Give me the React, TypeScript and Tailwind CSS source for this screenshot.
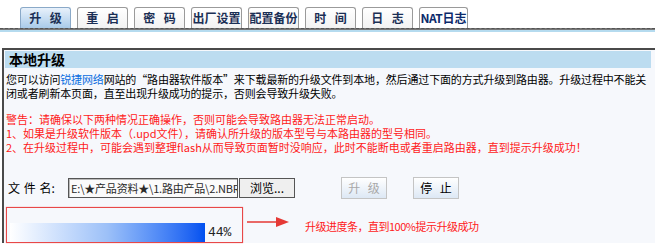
import React from "react";

const tabs = ["升 级", "重 启", "密 码", "出厂设置", "配置备份", "时 间", "日 志"];

function Tab({ label, active }: { label: string; active?: boolean }) {
  return (
    <div
      className={
        active
          ? "flex h-[21px] w-[51px] items-center justify-center rounded-t-[3px] border border-b-0 border-[#8aa9c8] bg-gradient-to-b from-[#e8f1fb] to-[#a9cbe9] text-[12px] font-bold text-[#1b2f55] [word-spacing:6px]"
          : "flex h-[21px] w-[51px] items-center justify-center rounded-t-[3px] border border-b-0 border-[#9a9a9a] bg-gradient-to-b from-white to-[#f2f2f2] text-[12px] font-bold text-[#1b2f55] [word-spacing:6px]"
      }
    >
      {label}
    </div>
  );
}

function TabBar() {
  return (
    <div className="pt-[7px]">
      <div className="flex gap-[6px] pl-[20px]">
        <Tab label={tabs[0]} active />
        {tabs.slice(1).map((t) => (
          <Tab key={t} label={t} />
        ))}
        <div className="flex h-[21px] w-[49px] items-center justify-center rounded-t-[3px] border border-b-0 border-[#9a9a9a] bg-white text-[12px] font-bold text-[#0b2a6b]">
          <span className="tracking-[-0.5px]">NAT</span>日志
        </div>
      </div>
      <div className="h-[2px] border-t border-dashed border-[#555] bg-[#777]" />
      <div className="h-[2px] bg-[#b5dbef]" />
    </div>
  );
}

function Arrow() {
  return (
    <svg width="44" height="12" viewBox="0 0 44 12" className="mt-[-6px]">
      <line x1="0" y1="6" x2="30" y2="6" stroke="#e53935" strokeWidth="1.5" />
      <polygon points="29,1 42,6 29,11" fill="#e53935" />
    </svg>
  );
}

function Panel() {
  return (
    <div className="ml-[2px] mt-[16px] border-l-2 border-t-2 border-[#4a4a4a] bg-[#f6f8fc] pl-[1px] pt-[1px]">
      <div className="mr-[4px] flex h-[17px] items-center bg-[#bcdcf0] pl-[4px] text-[14px] font-bold text-black">
        本地升级
      </div>
      <div className="whitespace-nowrap pl-[1px] pt-[4px] text-[11px] leading-[14px] text-black">
        <p className="tracking-[-0.15px]">
          您可以访问<span className="text-[#0a6ee0]">锐捷网络</span>网站的“路由器软件版本”来下载最新的升级文件到本地，然后通过下面的方式升级到路由器。升级过程中不能关
          <br />
          闭或者刷新本页面，直至出现升级成功的提示，否则会导致升级失败。
        </p>
        <div className="mt-[12px] text-[#ff1a1a]">
          <p>警告：请确保以下两种情况正确操作，否则可能会导致路由器无法正常启动。</p>
          <p>1、如果是升级软件版本（.upd文件），请确认所升级的版本型号与本路由器的型号相同。</p>
          <p>2、在升级过程中，可能会遇到整理flash从而导致页面暂时没响应，此时不能断电或者重启路由器，直到提示升级成功！</p>
        </div>
      </div>
      <div className="mt-[23px] flex items-center">
        <span className="ml-[3px] w-[60px] text-[12px] [word-spacing:1px]">文 件 名:</span>
        <div className="h-[20px] w-[170px] overflow-hidden whitespace-nowrap border border-[#555] bg-[#fbfbfb] pl-[2px] text-[11px] leading-[18px] tracking-[-0.2px] text-[#2a2a2a] shadow-[inset_1px_1px_0_#bbb]">
          E:\★产品资料★\1.路由产品\2.NBR
        </div>
        <div className="ml-[1px] flex h-[20px] w-[56px] items-center justify-center border border-[#555] bg-[#efefef] text-[12px] text-black">
          浏览...
        </div>
        <div className="ml-[46px] flex h-[22px] w-[46px] items-center justify-center border border-[#c4c4c4] bg-gradient-to-b from-white to-[#dde8f5] text-[12px] text-[#a8a8a8] [word-spacing:5px]">
          升 级
        </div>
        <div className="ml-[26px] flex h-[22px] w-[46px] items-center justify-center border border-[#c4c4c4] bg-gradient-to-b from-white to-[#dde8f5] text-[12px] text-black [word-spacing:5px]">
          停 止
        </div>
      </div>
      <div className="mt-[8px] flex items-center">
        <div className="ml-[1px] flex h-[36px] w-[237px] items-end border border-[#e84848] pl-[3px] shadow-[0_0_1px_#f08080]">
          <div className="h-[19px] w-[195px] bg-gradient-to-r from-white via-[#9cc0f8] to-[#0050f0]" />
          <span className="ml-[3px] pb-[1px] font-['Liberation_Mono',monospace] text-[13px] leading-[16px] text-[#222]">
            44%
          </span>
        </div>
        <div className="ml-[4px]">
          <Arrow />
        </div>
        <span className="ml-[14px] mt-[2px] text-[11px] tracking-[-0.5px] text-[#ff1a1a]">升级进度条，直到100%提示升级成功</span>
      </div>
    </div>
  );
}

export default function App() {
  return (
    <div className="h-[245px] w-[655px] overflow-hidden bg-white font-['Noto_Sans_CJK_SC','Liberation_Sans',sans-serif] text-[12px]">
      <TabBar />
      <Panel />
    </div>
  );
}
